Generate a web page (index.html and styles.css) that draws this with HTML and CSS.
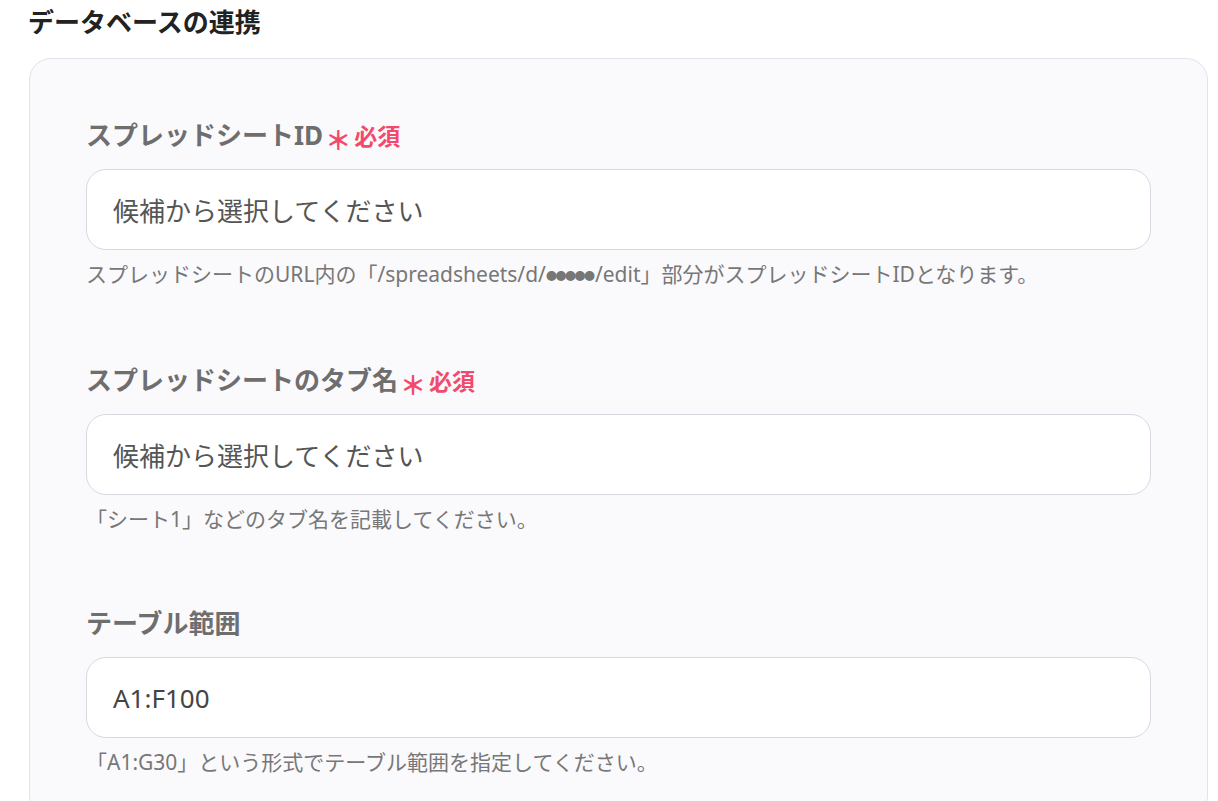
FILE: index.html
```html
<!DOCTYPE html>
<html lang="ja">

<head>
    <meta charset="utf-8">
    <meta name="viewport" content="width=device-width, initial-scale=1.0">
    <link rel="stylesheet" href="styles.css">
    <title>データベースの連携</title>
</head>

<body>
    <div class="page">
        <h2 class="section-title">データベースの連携</h2>

        <div class="card">
            <!-- スプレッドシートID -->
            <div class="field">
                <div class="field-label">
                    スプレッドシートID<span class="req-mark">＊</span><span class="req-text">必須</span>
                </div>
                <div class="field-input placeholder">候補から選択してください</div>
                <p class="field-help">スプレッドシートのURL内の「/spreadsheets/d/<span class="dots">●●●●●</span>/edit」部分がスプレッドシートIDとなります。</p>
            </div>

            <!-- タブ名 -->
            <div class="field">
                <div class="field-label">
                    スプレッドシートのタブ名<span class="req-mark">＊</span><span class="req-text">必須</span>
                </div>
                <div class="field-input placeholder">候補から選択してください</div>
                <p class="field-help">「シート1」などのタブ名を記載してください。</p>
            </div>

            <!-- テーブル範囲 -->
            <div class="field">
                <div class="field-label">テーブル範囲</div>
                <div class="field-input">A1:F100</div>
                <p class="field-help">「A1:G30」という形式でテーブル範囲を指定してください。</p>
            </div>
        </div>
    </div>
</body>

</html>
```

FILE: styles.css
```css
/* ページ全体 */
body {
    margin: 0;
    background-color: #fff;
    font-family: "Noto Sans", "Noto Sans CJK JP", sans-serif;
}

.page {
    padding: 4px 10px 0 29px;
    height: 801px;
    overflow: hidden;
    box-sizing: border-box;
}

/* 見出し */
.section-title {
    margin: 0 0 18px -1px;
    font-size: 26px;
    line-height: 36px;
    font-weight: bold;
    color: #222;
}

/* カード */
.card {
    border: 1px solid #e3e2ea;
    border-radius: 22px;
    background-color: #faf9fc;
    padding: 58px 56px 40px 56px;
    display: flex;
    flex-direction: column;
    gap: 71px;
}

.field-label {
    height: 36px;
    font-size: 26px;
    line-height: 36px;
    font-weight: bold;
    color: #6e6e6e;
    margin-bottom: 16px;
    display: flex;
    align-items: center;
}

.req-mark {
    color: #f24a6b;
    font-size: 26px;
    line-height: 1;
    font-weight: bold;
    margin: 9px 3px 0 2px;
}

.req-text {
    color: #f24a6b;
    font-size: 23px;
    line-height: 1;
    font-weight: bold;
    margin-top: 2px;
}

.field-input {
    height: 81px;
    box-sizing: border-box;
    border: 1px solid #d9d8e1;
    border-radius: 20px;
    background-color: #fff;
    padding: 0 26px;
    display: flex;
    align-items: center;
    font-size: 26px;
    color: #444;
}

.placeholder {
    color: #555;
}

.field-help {
    margin: 9px 0 0 0;
    font-size: 21px;
    line-height: 30px;
    color: #777;
}

.dots {
    font-size: 11px;
    letter-spacing: -1.5px;
    margin-right: 1.5px;
    vertical-align: 2px;
}
```
